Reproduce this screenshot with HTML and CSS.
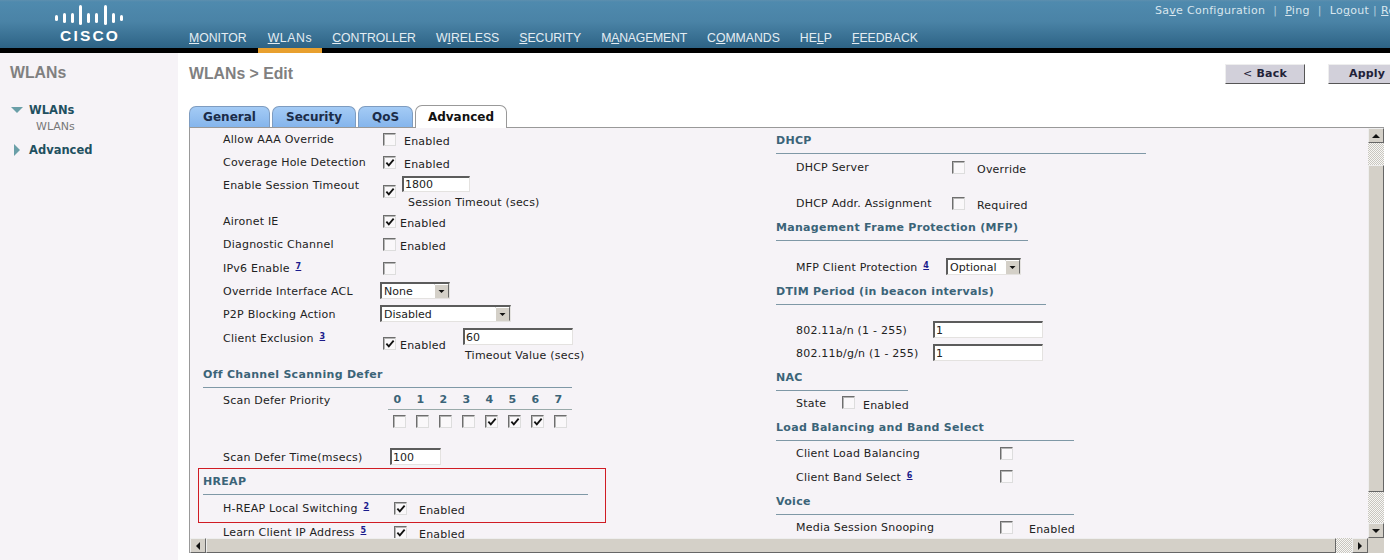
FILE: index.html
```html
<!DOCTYPE html>
<html lang="en">
<head>
<meta charset="utf-8">
<title>WLANs &gt; Edit</title>
<link rel="stylesheet" href="styles.css">
</head>
<body>
<header class="topbar">
  <div class="logo">
    <svg class="logo-bars" width="70" height="22" viewBox="0 0 70 22">
      <g fill="#fff">
        <rect x="4" y="12" width="3" height="6" rx="1.5"/>
        <rect x="12" y="10" width="3" height="10" rx="1.5"/>
        <rect x="20" y="10" width="3" height="10" rx="1.5"/>
        <rect x="28" y="2" width="3" height="20" rx="1.5"/>
        <rect x="36" y="10" width="3" height="10" rx="1.5"/>
        <rect x="44" y="10" width="3" height="10" rx="1.5"/>
        <rect x="53" y="2" width="3" height="20" rx="1.5"/>
        <rect x="61" y="10" width="3" height="10" rx="1.5"/>
        <rect x="69" y="12" width="3" height="6" rx="1.5"/>
      </g>
    </svg>
    <span class="logo-text">CISCO</span>
  </div>
  <div class="top-right">
    <div class="util">
      <a>Sa<u>v</u>e Configuration</a><span class="sep">|</span><a><u>P</u>ing</a><span class="sep">|</span><a>Lo<u>g</u>out</a><span class="sep sep-n">|</span><a><u>R</u>efresh</a>
    </div>
    <nav class="nav">
      <a class="nav-first"><u>M</u>ONITOR</a><a class="active"><u>W</u>LANs</a><a><u>C</u>ONTROLLER</a><a>W<u>I</u>RELESS</a><a><u>S</u>ECURITY</a><a class="nav-mgmt">M<u>A</u>NAGEMENT</a><a>C<u>O</u>MMANDS</a><a>HE<u>L</u>P</a><a><u>F</u>EEDBACK</a>
    </nav>
  </div>
</header>
<div class="page">
  <aside class="side">
    <h2 class="side-title">WLANs</h2>
    <div class="tree-item"><i class="tri-down"></i><b>WLANs</b></div>
    <div class="tree-sub">WLANs</div>
    <div class="tree-item tree-adv"><i class="tri-right"></i><b>Advanced</b></div>
  </aside>
  <main class="main">
    <div class="title-row">
      <h1 class="title">WLANs &gt; Edit</h1>
      <div class="actions">
        <button class="btn btn-back"><span class="btn-lt">&lt;</span> Back</button>
        <button class="btn btn-apply">Apply</button>
      </div>
    </div>
    <div class="tabs">
      <a class="tab tab-gen">General</a><a class="tab tab-sec">Security</a><a class="tab tab-qos">QoS</a><a class="tab tab-adv">Advanced</a>
    </div>
    <section class="panel">
      <div class="content">
        <div class="col col-l">
          <div class="row h23"><span class="lbl w160">Allow AAA Override</span><input class="cb" type="checkbox"><span class="txt ml8">Enabled</span></div>
          <div class="row h23"><span class="lbl w160">Coverage Hole Detection</span><input class="cb" type="checkbox" checked><span class="txt ml8">Enabled</span></div>
          <div class="row h36"><span class="lbl w160">Enable Session Timeout</span><input class="cb cb-low" type="checkbox" checked>
            <div class="stack ml6"><input class="in in-s w68" type="text" value="1800"><span class="cap ml6">Session Timeout (secs)</span></div></div>
          <div class="row h23"><span class="lbl w160">Aironet IE</span><input class="cb" type="checkbox" checked><span class="txt ml4">Enabled</span></div>
          <div class="row h24"><span class="lbl w160">Diagnostic Channel</span><input class="cb" type="checkbox"><span class="txt ml4">Enabled</span></div>
          <div class="row h23"><span class="lbl w160">IPv6 Enable <a class="sup">7</a></span><input class="cb" type="checkbox"></div>
          <div class="row h23"><span class="lbl w157">Override Interface ACL</span><select class="sel w70"><option>None</option></select></div>
          <div class="row h24"><span class="lbl w157">P2P Blocking Action</span><select class="sel w131"><option>Disabled</option></select></div>
          <div class="row h36"><span class="lbl w160">Client Exclusion <a class="sup">3</a></span><input class="cb cb-low2" type="checkbox" checked><span class="txt ml4 txt-low w63">Enabled</span>
            <div class="stack"><input class="in w110" type="text" value="60"><span class="cap ml2">Timeout Value (secs)</span></div></div>
          <h3 class="head hw369 mb1">Off Channel Scanning Defer</h3>
          <div class="row h57"><span class="lbl w165">Scan Defer Priority</span>
            <div class="prio">
              <b>0</b><b>1</b><b>2</b><b>3</b><b>4</b><b>5</b><b>6</b><b>7</b>
              <input class="cb" type="checkbox"><input class="cb" type="checkbox"><input class="cb" type="checkbox"><input class="cb" type="checkbox"><input class="cb" type="checkbox" checked><input class="cb" type="checkbox" checked><input class="cb" type="checkbox" checked><input class="cb" type="checkbox">
            </div></div>
          <div class="row h24"><span class="lbl w167">Scan Defer Time(msecs)</span><input class="in in-scan w51" type="text" value="100"></div>
          <div class="hreap">
            <h3 class="head hw385 mb2">HREAP</h3>
            <div class="row h24"><span class="lbl w171">H-REAP Local Switching <a class="sup">2</a></span><input class="cb" type="checkbox" checked><span class="txt ml12">Enabled</span></div>
          </div>
          <div class="row h24"><span class="lbl w171">Learn Client IP Address <a class="sup">5</a></span><input class="cb" type="checkbox" checked><span class="txt ml12">Enabled</span></div>
        </div>
        <div class="col col-r">
          <h3 class="head hw370 mb2">DHCP</h3>
          <div class="row h36"><span class="lbl w156">DHCP Server</span><input class="cb" type="checkbox"><span class="txt ml12">Override</span></div>
          <div class="row h24"><span class="lbl w156">DHCP Addr. Assignment</span><input class="cb" type="checkbox"><span class="txt ml12">Required</span></div>
          <h3 class="head hw252 mb15">Management Frame Protection (MFP)</h3>
          <div class="row h24"><span class="lbl w150">MFP Client Protection <a class="sup">4</a></span><select class="sel w75"><option>Optional</option></select></div>
          <h3 class="head hw270 mb15">DTIM Period (in beacon intervals)</h3>
          <div class="row h23"><span class="lbl lbl-n w137">802.11a/n (1 - 255)</span><input class="in w110" type="text" value="1"></div>
          <div class="row h23"><span class="lbl lbl-n w137">802.11b/g/n (1 - 255)</span><input class="in w110" type="text" value="1"></div>
          <h3 class="head hw132 mb1">NAC</h3>
          <div class="row h24"><span class="lbl w46">State</span><input class="cb cb-s" type="checkbox"><span class="txt ml8">Enabled</span></div>
          <h3 class="head hw298 mb1">Load Balancing and Band Select</h3>
          <div class="row h24"><span class="lbl w204">Client Load Balancing</span><input class="cb" type="checkbox"></div>
          <div class="row h24"><span class="lbl w204">Client Band Select <a class="sup">6</a></span><input class="cb cb-s" type="checkbox"></div>
          <h3 class="head hw298 mb1">Voice</h3>
          <div class="row h24"><span class="lbl w204">Media Session Snooping</span><input class="cb" type="checkbox"><span class="txt ml16">Enabled</span></div>
        </div>
      </div>
      <div class="vbar">
        <div class="sb-btn"><i class="arr-up"></i></div>
        <div class="track tr-v1"></div>
        <div class="thumb th-v"></div>
        <div class="track tr-v2"></div>
        <div class="sb-btn"><i class="arr-down"></i></div>
      </div>
      <div class="hbar">
        <div class="sb-btn sb-h"><i class="arr-left"></i></div>
        <div class="thumb th-h"></div>
        <div class="track tr-h"></div>
        <div class="sb-btn sb-h"><i class="arr-right"></i></div>
      </div>
      <div class="corner"></div>
    </section>
  </main>
</div>
</body>
</html>
```
FILE: styles.css
```css
* { box-sizing: border-box; }
html, body { margin: 0; padding: 0; height: 560px; overflow: hidden; background: #fff; }
body { font: 11px/22px "DejaVu Sans", Verdana, sans-serif; color: #222; width: 1390px; }
h1, h2, h3 { margin: 0; }

/* header */
.topbar { display: flex; height: 53px; border-bottom: 5px solid #000; background: linear-gradient(#5d8fae 0, #4f8aae 4%, #4a83a6 45%, #2d6385 100%); }
.logo { width: 179px; flex: none; display: flex; flex-direction: column; align-items: flex-start; padding: 3px 0 0 51px; }
.logo-bars { display: block; overflow: visible; }
.logo-text { font: bold 15.5px/15px "Liberation Sans", Arial, sans-serif; letter-spacing: 2.2px; color: #fff; margin: 3px 0 0 9px; }
.top-right { flex: 1; min-width: 0; display: flex; flex-direction: column; justify-content: space-between; }
.util { padding: 4px 0 0 976px; font-size: 11px; line-height: 14px; letter-spacing: .28px; color: #d9e6ee; white-space: nowrap; overflow: hidden; }
.sep { margin: 0 8px; opacity: .7; }
.sep-n { margin: 0 4px; }
.nav { display: flex; height: 20px; font: 12.25px/20px "Liberation Sans", Arial, sans-serif; color: #e4edf3; }
.nav a { padding: 0 10px; position: relative; height: 20px; }
.nav .nav-first { padding-right: 11px; }
.nav .nav-mgmt { letter-spacing: -.2px; }
.nav .active { letter-spacing: .6px; }
.nav .active::after { content: ""; position: absolute; left: 0; right: 0; top: 20px; height: 5px; background: #e8a02e; }

/* layout */
.page { display: flex; height: 507px; }
.side { width: 178px; flex: none; background: #f6f3f7; padding: 9px 0 0 10px; }
.side-title { font: bold 15.8px/22px "Liberation Sans", Arial, sans-serif; color: #808080; margin-bottom: 18px; }
.tree-item { display: flex; align-items: center; height: 16px; font-size: 11.5px; line-height: 16px; color: #1f5060; }
.tree-item b { margin-left: 7px; }
.tree-sub { padding-left: 26px; color: #777; height: 16px; line-height: 16px; margin: 1px 0 0; }
.tree-adv { margin-top: 7px; }
.tri-down { width: 12px; height: 6px; margin-left: 1px; margin-right: -1px; border-style: solid; border-width: 6px 6px 0; border-color: #6a9fa8 transparent transparent; }
.tri-right { width: 6px; height: 12px; margin: 0 2px 0 4px; border-style: solid; border-width: 6px 0 6px 6px; border-color: transparent transparent transparent #6a9fa8; }
.main { flex: 1; min-width: 0; padding: 10px 0 0 11px; overflow: hidden; }
.title-row { display: flex; justify-content: space-between; height: 22px; margin-bottom: 20px; }
.title { font: bold 15.8px/22px "Liberation Sans", Arial, sans-serif; color: #808080; }
.actions { display: flex; gap: 23px; margin: 1px -18px 0 0; }
.btn { height: 20px; padding: 0; font: bold 11px/16px "DejaVu Sans", Verdana, sans-serif; letter-spacing: .2px; color: #222238; background: #d2d0da; border: 1px solid; border-color: #eee #555 #555 #eee; }
.btn-lt { font-weight: normal; }
.btn-back { width: 80px; flex: none; }
.btn-apply { width: 80px; flex: none; text-align: left; padding-left: 20px; }

/* tabs */
.tabs { display: flex; gap: 2px; height: 22px; align-items: flex-end; position: relative; z-index: 1; }
.tab { display: block; height: 21px; border: 1px solid #7e9cc0; border-bottom: 0; border-radius: 7px 7px 0 0; background: linear-gradient(#a4cbf5, #85b5ec); font: bold 12px/20px "DejaVu Sans", Verdana, sans-serif; color: #1b2c48; text-align: center; }
.tab-gen { width: 81px; }
.tab-sec { width: 84px; }
.tab-qos { width: 55px; }
.tab-adv { width: 92px; height: 23px; margin-bottom: -1px; background: #fff; border-color: #999; color: #111; line-height: 22px; }

/* panel */
.panel { width: 1195px; height: 426px; background: #f6f3f7; border-top: 1px solid #999; border-left: 1px solid #999; display: grid; grid-template-columns: 1178px 16px; grid-template-rows: 410px 15px; }
.content { display: flex; overflow: hidden; letter-spacing: .22px; }
.col { flex: none; }
.col-l { width: 586px; padding-left: 13px; }
.col-r { padding-top: 1px; }
.row { display: flex; align-items: flex-start; margin-left: 20px; white-space: nowrap; }
.h23 { height: 23px; } .h24 { height: 24px; } .h36 { height: 36px; } .h57 { height: 57px; }
.lbl { flex: none; display: block; line-height: 24px; }
.lbl-n { line-height: 22px; }
.w46 { width: 46px; } .w137 { width: 137px; } .w150 { width: 150px; } .w156 { width: 156px; } .w157 { width: 157px; } .w160 { width: 160px; } .w165 { width: 165px; } .w167 { width: 167px; } .w171 { width: 171px; } .w204 { width: 204px; }
.txt { margin-top: 3px; flex: none; }
.ml2 { margin-left: 2px; } .ml4 { margin-left: 4px; } .ml6 { margin-left: 6px; } .ml8 { margin-left: 8px; } .ml12 { margin-left: 12px; } .ml16 { margin-left: 16px; }
.txt-low { margin-top: 8px; }
.w63 { width: 63px; }
.stack { display: flex; flex-direction: column; align-items: flex-start; }
.cap { line-height: 16px; margin-top: 3px; }
.sup { font-size: 8px; font-weight: bold; line-height: 0; vertical-align: 3px; margin-left: 2px; color: #1b1b8c; text-decoration: underline; }

/* form controls */
.cb { appearance: none; flex: none; width: 13px; height: 13px; margin: 5px 0 0; background: #faf8fa center/10px 10px no-repeat; border: 1px solid; border-color: #6e6e6e #ddd #ddd #6e6e6e; box-shadow: inset 1px 1px 0 #b5b5b5; }
.cb:checked { background-image: url("data:image/svg+xml,%3Csvg xmlns='http://www.w3.org/2000/svg' viewBox='0 0 11 11'%3E%3Cpath d='M1.5 5l2.7 3L9.5 1.8' fill='none' stroke='%23111' stroke-width='2'/%3E%3C/svg%3E"); }
.cb-low { margin-top: 11px; }
.cb-low2 { margin-top: 10px; }
.cb-s { margin-top: 4px; }
.in { flex: none; height: 17px; padding: 0 1px; margin: 1px 0 0; font: 11px/13px "DejaVu Sans", Verdana, sans-serif; color: #222; background: #fff; border: 2px solid; border-color: #5c5c5c #e4e2e0 #e4e2e0 #5c5c5c; border-width: 2px 1px 1px 2px; border-radius: 0; outline: 0; }
.stack .in-s { margin-top: 2px; height: 16px; }
.row .in-scan { margin-top: 2px; }
.w51 { width: 51px; } .w68 { width: 68px; } .w110 { width: 110px; }
.sel { appearance: none; flex: none; height: 17px; padding: 0 0 0 2px; margin: 2px 0 0; font: 11px/13px "DejaVu Sans", Verdana, sans-serif; color: #222; border: 1px solid; border-width: 2px 1px 1px 2px; border-color: #5c5c5c #e4e2e0 #e4e2e0 #5c5c5c; border-radius: 0;
  background: #fff url("data:image/svg+xml,%3Csvg xmlns='http://www.w3.org/2000/svg' width='15' height='14'%3E%3Crect width='15' height='14' fill='%23d4d0c8'/%3E%3Cpath d='M0 .5H14.5V13.5' fill='none' stroke='%23666'/%3E%3Cpath d='M.5 14V.5H14' fill='none' stroke='%23fff'/%3E%3Cpath d='M4.5 6h6l-3 3z' fill='%23111'/%3E%3C/svg%3E") right top no-repeat; }
.w70 { width: 70px; } .w75 { width: 75px; } .w131 { width: 131px; }
.prio { display: grid; grid-template-columns: repeat(8, 23px); grid-template-rows: 21px 20px; width: 184px; justify-items: center; }
.prio b { font-size: 11px; line-height: 22px; color: #3b6478; height: 21px; width: 23px; padding-right: 4px; text-align: center; border-bottom: 1px solid #9aa; }

/* section headings */
.head { font: bold 11px/24px "DejaVu Sans", Verdana, sans-serif; letter-spacing: .3px; color: #3b6478; height: 25px; border-bottom: 1px solid #7f98a6; white-space: nowrap; }
.hw132 { width: 132px; } .hw252 { width: 252px; } .hw270 { width: 270px; } .hw298 { width: 298px; } .hw369 { width: 369px; } .hw370 { width: 370px; } .hw385 { width: 385px; }
.mb1 { margin-bottom: 1px; } .mb2 { margin-bottom: 2px; } .mb15 { margin-bottom: 15px; }
.hreap { position: relative; }
.hreap::after { content: ""; position: absolute; left: -5px; top: -2px; width: 406px; height: 53px; border: 1px solid #d01c24; pointer-events: none; }

/* scrollbars */
.vbar { display: flex; flex-direction: column; }
.hbar { display: flex; }
.sb-btn, .thumb { background: #d4d0c8; border: 1px solid; border-color: #eee #666 #666 #eee; }
.sb-btn { flex: none; height: 15px; display: flex; align-items: center; justify-content: center; }
.sb-h { width: 16px; height: 15px; }
.track { background: repeating-conic-gradient(#c8c6c0 0 25%, #f8f7f4 0 50%) 0 0/2px 2px; }
.tr-v1 { height: 22px; flex: none; }
.th-v { height: 327px; flex: none; }
.tr-v2 { flex: 1; }
.th-h { width: 1130px; flex: none; }
.tr-h { flex: 1; }
.corner { background: #d4d0c8; }
.vbar i, .hbar i { width: 0; height: 0; border-style: solid; border-color: transparent; }
.vbar .arr-up { border-width: 0 4px 4px; border-bottom-color: #111; }
.vbar .arr-down { border-width: 4px 4px 0; border-top-color: #111; }
.hbar .arr-left { border-width: 4px 4px 4px 0; border-right-color: #111; }
.hbar .arr-right { border-width: 4px 0 4px 4px; border-left-color: #111; }
```
